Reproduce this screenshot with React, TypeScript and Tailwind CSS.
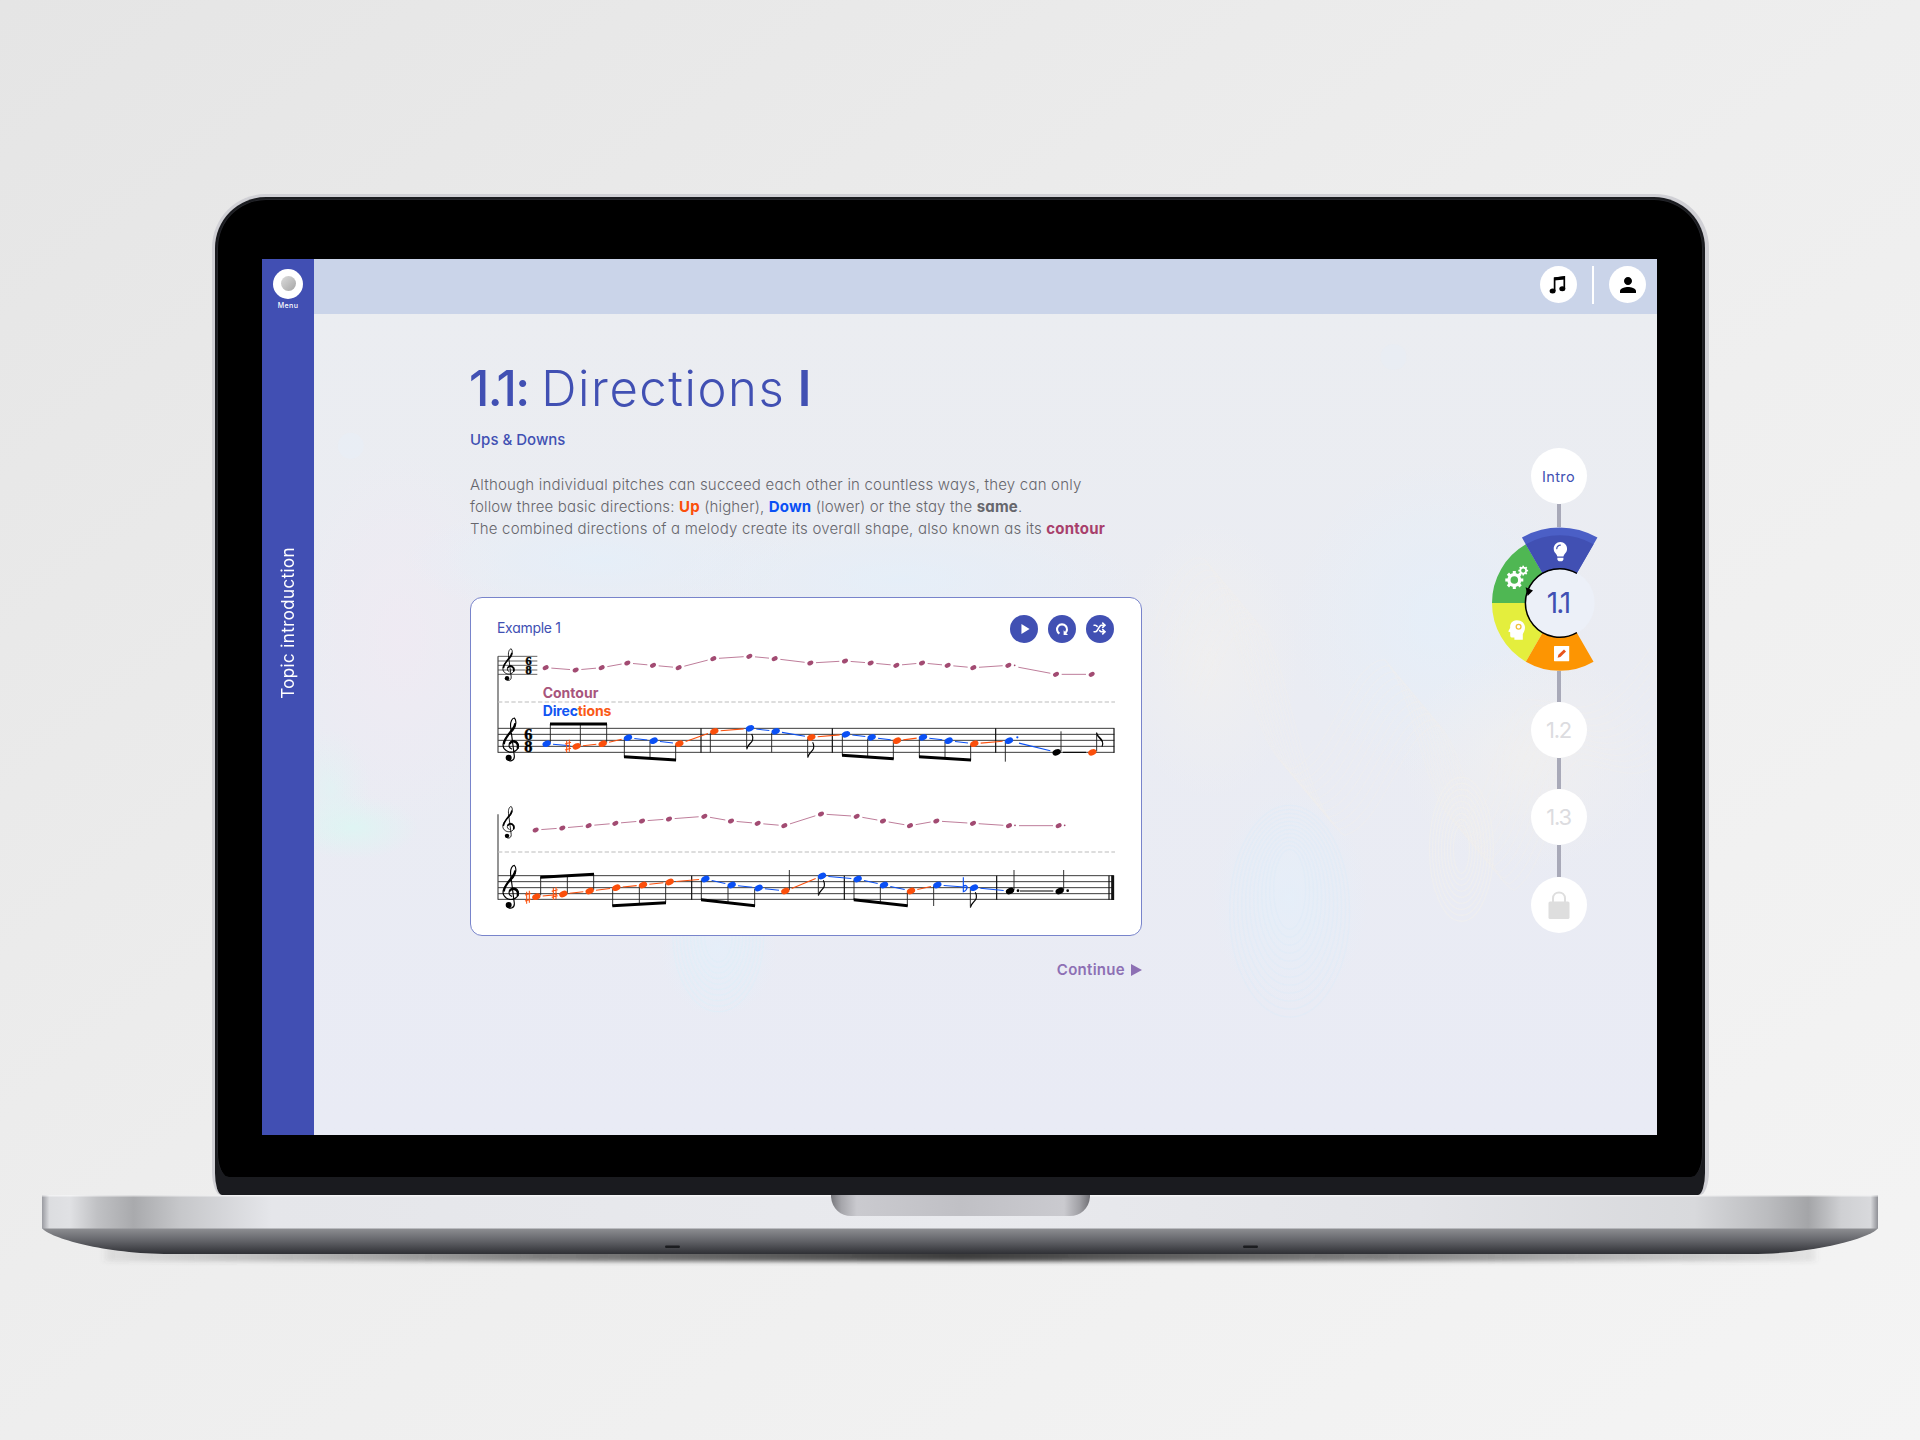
import { FaLightbulb } from "react-icons/fa";
import { MdPerson } from "react-icons/md";
import { Shuffle } from "lucide-react";

const UP = "#fb4f0b";
const DOWN = "#0a50f5";
const SAME = "#000000";
const PLUM = "#a24b72";

type Point = [number, number];

const contour1: Point[] = [
  [257, 233], [347, 240], [425, 233], [502, 219], [579, 226], [656, 233], [760, 206], [868, 199], [944, 206], [1051, 219],
  [1155, 213], [1232, 219], [1309, 226], [1386, 219], [1463, 226], [1540, 233], [1645, 226], [1788, 253], [1895, 253],
];
const contour2: Point[] = [
  [227, 720], [307, 714], [386, 707], [466, 700], [546, 693], [627, 687], [733, 679], [813, 693], [893, 700], [973, 707],
  [1083, 672], [1190, 679], [1269, 693], [1350, 707], [1429, 693], [1539, 700], [1647, 707], [1796, 707],
];
const melody1: [number, number, string][] = [
  [260, 461, DOWN], [350, 469, UP], [428, 461, UP], [504, 443, DOWN], [581, 452, DOWN], [658, 461, UP], [763, 424, UP],
  [870, 415, DOWN], [947, 424, DOWN], [1054, 442, UP], [1158, 433, DOWN], [1235, 442, DOWN], [1311, 452, UP],
  [1389, 442, DOWN], [1466, 452, DOWN], [1543, 461, UP], [1647, 452, DOWN], [1790, 487, SAME], [1897, 487, UP],
];
const melody2: [number, number, string][] = [
  [229, 920, UP], [310, 912, UP], [389, 903, UP], [469, 893, UP], [549, 885, UP], [629, 876, UP], [736, 867, DOWN],
  [815, 885, DOWN], [896, 894, DOWN], [976, 903, UP], [1086, 858, DOWN], [1193, 867, DOWN], [1272, 885, DOWN],
  [1353, 903, UP], [1432, 885, DOWN], [1542, 893, DOWN], [1650, 903, SAME], [1799, 903, SAME],
];
const stems: [number, number, number][] = [
  [271, 402, 458], [361, 402, 465], [440, 402, 458], [493, 446, 502], [570, 455, 506], [647, 464, 511], [751, 428, 487],
  [860, 418, 474], [935, 428, 487], [1043, 446, 500], [1147, 436, 496], [1223, 446, 502], [1300, 455, 507], [1378, 446, 502],
  [1455, 455, 506], [1532, 464, 511], [1636, 455, 515], [1803, 424, 484], [1910, 427, 484],
  [242, 860, 916], [322, 856, 909], [401, 852, 900], [458, 896, 948], [538, 888, 944], [617, 880, 938], [724, 870, 930],
  [804, 888, 938], [884, 897, 948], [988, 840, 900], [1075, 861, 914], [1182, 870, 930], [1261, 888, 938], [1342, 906, 948],
  [1421, 888, 948], [1531, 897, 950], [1662, 840, 900], [1811, 840, 900],
];
const beams: [number, number, number, number][] = [
  [271, 402, 440, 402], [493, 500, 647, 510], [1147, 496, 1300, 506], [1378, 500, 1532, 510],
  [242, 862, 401, 853], [458, 947, 617, 938], [724, 929, 884, 947], [1182, 929, 1342, 947],
];

function Clef({ x, y, scale }: { x: number; y: number; scale: number }) {
  return (
    <g transform={`translate(${x} ${y}) scale(${scale})`} fill="none" stroke="#000" strokeLinecap="round">
      <path strokeWidth="3.4" d="M14 125 C20 134 37 132 36 116 L25 30 C23 12 30 2 36 2 C43 8 42 26 33 38 C22 51 2 64 2 82 C2 98 18 106 30 104 C43 102 50 92 48 82 C45 69 28 66 22 77 C18 86 21 92 28 95" />
      <path strokeWidth="6.5" d="M38 20 C37 36 8 55 5 78" />
      <path strokeWidth="6.5" d="M46 92 C50 76 32 66 23 78" />
      <circle cx="19" cy="121" r="9" fill="#000" stroke="none" />
    </g>
  );
}

function Meter({ x, y1, y2, size }: { x: number; y1: number; y2: number; size: number }) {
  return (
    <g fontFamily="Liberation Serif, serif" fontWeight="700" fontSize={size} textAnchor="middle" stroke="#000" strokeWidth="1.2">
      <text x={x} y={y1}>6</text>
      <text x={x} y={y2}>8</text>
    </g>
  );
}

function Staff({ lines, x2, width }: { lines: number[]; x2: number; width: number }) {
  return (
    <g stroke="#2c2c2c" strokeWidth={width}>
      {lines.map((y) => (
        <line key={y} x1="114" x2={x2} y1={y} y2={y} />
      ))}
    </g>
  );
}

function Links({ notes, gap, colour }: { notes: Point[]; gap: number; colour?: string }) {
  return (
    <>
      {notes.slice(0, -1).map(([x, y], i) => {
        const [nx, ny] = notes[i + 1];
        const left = nx - x > 135 ? 30 : gap;
        const t = left / (nx - x);
        const u = gap / (nx - x);
        const stroke = colour ?? (ny < y ? UP : ny > y ? DOWN : SAME);
        return (
          <line
            key={x}
            x1={x + left}
            y1={y + (ny - y) * t}
            x2={nx - gap}
            y2={ny - (ny - y) * u}
            stroke={stroke}
            strokeWidth={colour ? 2.6 : 3.2}
          />
        );
      })}
    </>
  );
}

function Score() {
  return (
    <svg viewBox="90 165 1896 840" className="h-[280px] w-[632px]">
      <Staff lines={[199, 213, 226, 240, 253]} x2={232} width={2.2} />
      <Staff lines={[415, 433, 451, 469, 487]} x2={1963} width={2.8} />
      <Staff lines={[857, 875, 893, 911, 928]} x2={1961} width={2.8} />
      <g stroke="#444" strokeWidth="3.4">
        <line x1="114" x2="114" y1="199" y2="488" />
        <line x1="114" x2="114" y1="673" y2="929" />
      </g>
      <g stroke="#111" strokeWidth="3.6">
        {[723, 1117, 1607, 1962].map((x) => (
          <line key={x} x1={x} x2={x} y1="415" y2="488" />
        ))}
        {[695, 1153, 1610, 1947].map((x) => (
          <line key={x} x1={x} x2={x} y1="857" y2="929" />
        ))}
        <line x1="1958" x2="1958" y1="856" y2="930" strokeWidth="9" />
      </g>
      <g stroke="#bcbcbc" strokeWidth="3.6" strokeDasharray="13 7">
        <line x1="114" x2="1965" y1="336" y2="336" />
        <line x1="114" x2="1965" y1="786" y2="786" />
      </g>
      <Clef x={127} y={175} scale={0.74} />
      <Clef x={127} y={382} scale={1} />
      <Clef x={127} y={648} scale={0.74} />
      <Clef x={127} y={824} scale={1} />
      <Meter x={206} y1={224} y2={252} size={37} />
      <Meter x={205} y1={449} y2={486} size={49} />
      <g fontFamily="Inter, sans-serif" fontWeight="700" fontSize="42" className="[font-feature-settings:'cv11']">
        <text x="248" y="323" textLength="167" fill="#a8557c">Contour</text>
        <text x="248" y="379" textLength="206">
          <tspan fill="#1155f2">Direc</tspan>
          <tspan fill="#fa5a17">tions</tspan>
        </text>
      </g>
      <Links notes={contour1} gap={17} colour="#b4688a" />
      <Links notes={contour2} gap={17} colour="#b4688a" />
      <g fill={PLUM}>
        {[...contour1, ...contour2].map(([x, y]) => (
          <ellipse key={`${x}-${y}`} cx={x} cy={y} rx="9.5" ry="6.5" transform={`rotate(-28 ${x} ${y})`} />
        ))}
        <circle cx="1664" cy="226" r="2.6" />
        <circle cx="1665" cy="706" r="2.6" />
        <circle cx="1814" cy="706" r="2.6" />
      </g>
      <g stroke="#222" strokeWidth="2.8">
        {stems.map(([x, y1, y2]) => (
          <line key={`${x}-${y1}`} x1={x} x2={x} y1={y1} y2={y2} />
        ))}
      </g>
      <g fill="#000">
        {beams.map(([x1, y1, x2, y2]) => (
          <path key={`${x1}-${y1}`} d={`M${x1 - 1} ${y1 - 4.5}L${x2 + 1} ${y2 - 4.5}V${y2 + 4.5}L${x1 - 1} ${y1 + 4.5}Z`} />
        ))}
      </g>
      <g fill="none" stroke="#000" strokeWidth="3.4">
        {[[860, 478], [1043, 503], [1075, 917], [1531, 953]].map(([x, y]) => (
          <path key={x} d={`M${x} ${y}C${x + 3} ${y - 18} ${x + 28} ${y - 22} ${x + 15} ${y - 46}M${x + 1} ${y - 4}C${x + 5} ${y - 16} ${x + 12} ${y - 17} ${x + 17} ${y - 26}`} />
        ))}
        <path d="M1910 429C1913 444 1935 446 1926 470M1911 434C1916 445 1924 446 1928 458" />
      </g>
      <Links notes={melody1.map(([x, y]) => [x, y] as Point)} gap={19} />
      <Links notes={melody2.map(([x, y]) => [x, y] as Point)} gap={19} />
      {[...melody1, ...melody2].map(([x, y, colour]) => (
        <ellipse key={`${x}-${y}`} cx={x} cy={y} rx="13" ry="9" fill={colour} transform={`rotate(-24 ${x} ${y})`} />
      ))}
      <circle cx="1672" cy="442" r="3.4" fill={DOWN} />
      <circle cx="1674" cy="902" r="4" />
      <circle cx="1823" cy="902" r="4" />
      {[[324, 469], [204, 922], [284, 911]].map(([x, y]) => (
        <path
          key={x}
          d={`M${x - 4} ${y - 17}V${y + 19}M${x + 4} ${y - 20}V${y + 16}M${x - 9} ${y - 7}L${x + 9} ${y - 12}M${x - 9} ${y + 11}L${x + 9} ${y + 6}`}
          stroke={UP}
          strokeWidth="3.2"
        />
      ))}
      <path d="M1510 862V905C1524 900 1526 882 1511 887" stroke={DOWN} strokeWidth="3.4" fill="none" />
    </svg>
  );
}

const CX = 1559.7;
const CY = 603;

function polar(r: number, deg: number) {
  const a = (deg * Math.PI) / 180;
  return `${(CX + r * Math.cos(a)).toFixed(2)} ${(CY - r * Math.sin(a)).toFixed(2)}`;
}

function sector(inner: number, outer: number, from: number, to: number) {
  return `M${polar(outer, from)}A${outer} ${outer} 0 0 0 ${polar(outer, to)}L${polar(inner, to)}A${inner} ${inner} 0 0 1 ${polar(inner, from)}Z`;
}

function Gear({ x, y, r, teeth }: { x: number; y: number; r: number; teeth: number }) {
  return (
    <g transform={`translate(${x} ${y})`}>
      <circle r={r * 0.6} fill="none" stroke="#fff" strokeWidth={r * 0.36} />
      {Array.from({ length: teeth }, (_, i) => (
        <rect key={i} x={-r * 0.17} y={-r} width={r * 0.34} height={r * 0.34} fill="#fff" transform={`rotate(${(i * 360) / teeth})`} />
      ))}
    </g>
  );
}

function Wheel() {
  return (
    <svg viewBox="1479 527 160 144" className="h-[144px] w-[160px] shrink-0">
      <circle cx={CX} cy={CY} r="35" fill="#ecf0f8" />
      <path d={sector(34, 67.7, 120, 180)} fill="#4fb753" />
      <path d={sector(34, 67.7, 180, 240)} fill="#e4ee3d" />
      <path d={sector(34, 67.7, 240, 300)} fill="#fd9502" />
      <path d={sector(34, 75.5, 60, 120)} fill="#4b5fc6" />
      <path d={sector(34, 67.7, 60, 120)} fill="#4150b3" />
      <path d={`M${polar(34.3, 60)}A34.3 34.3 0 1 0 ${polar(34.3, 300)}`} fill="none" stroke="#000" strokeWidth="1.5" />
      <path d="M1525.6 587.2L1533 590.6L1527.6 596Z" />
      <Gear x={1514.3} y={580} r={9} teeth={8} />
      <Gear x={1523.2} y={570.6} r={4.9} teeth={8} />
      <path
        d="M1516.5 620.2C1521.5 620 1525 623.2 1525 627.6C1525 630.6 1523.6 632.4 1522.8 634.2V639.8H1514.4V637.4C1511.8 637.8 1510.2 637.4 1510.2 635.4V632.2L1508.2 631.4L1510.2 627.8C1509.8 623.6 1512 620.4 1516.5 620.2Z"
        fill="#fff"
      />
      <circle cx="1518.6" cy="626.8" r="2.4" fill="none" stroke="#f0c23c" strokeWidth="1.3" />
      <rect x="1554" y="646" width="15.2" height="15.2" rx="0.6" fill="#fff" />
      <path d="M1557.6 657.8L1558.4 654.8L1564 649.6L1566 651.6L1560.4 657Z" fill="#e8541c" />
      <g transform="translate(1550.7 542)">
        <FaLightbulb size={19.4} color="#fff" />
      </g>
      <text x="1559" y="613" textAnchor="middle" textLength="24.5" fontFamily="Inter, sans-serif" fontSize="28" fontWeight="400" fill="#4150b3">1.1</text>
    </svg>
  );
}

function Link({ h }: { h: string }) {
  return <div className={`w-1 shrink-0 bg-[#a8a9b8] ${h}`} />;
}

const disc = "flex size-14 shrink-0 items-center justify-center rounded-full bg-white";

function Progress() {
  return (
    <nav className="flex w-[196px] shrink-0 flex-col items-center pt-[134px] pr-px">
      <div className={disc}>
        <span className="pt-px text-[14.5px] tracking-[0.4px] text-[#4150b3]">Intro</span>
      </div>
      <Link h="h-[23px]" />
      <div className="flex pl-px"><Wheel /></div>
      <Link h="h-[31px]" />
      <div className={disc}>
        <span className="text-[22px] tracking-[-1.2px] text-[#dcdce0]">1.2</span>
      </div>
      <Link h="h-[31px]" />
      <div className={disc}>
        <span className="text-[22px] tracking-[-1.2px] text-[#dcdce0]">1.3</span>
      </div>
      <Link h="h-[32px]" />
      <div className={disc}>
        <svg viewBox="0 0 22 28" className="h-7 w-[22px]">
          <path d="M5 12V7.5C5 -0.6 17 -0.6 17 7.5V12" fill="none" stroke="#dedede" strokeWidth="2" />
          <rect x="0.5" y="10.5" width="21" height="17.5" rx="1.6" fill="#dedede" />
        </svg>
      </div>
    </nav>
  );
}

function Backdrop() {
  return (
    <svg viewBox="314 314 1343 822" className="absolute inset-0 size-full">
      <defs>
        <radialGradient id="mint">
          <stop offset="0" stopColor="#def5f3" stopOpacity="0.95" />
          <stop offset="1" stopColor="#dff4f2" stopOpacity="0" />
        </radialGradient>
        <radialGradient id="sky">
          <stop offset="0" stopColor="#e4effa" stopOpacity="0.75" />
          <stop offset="1" stopColor="#e4effa" stopOpacity="0" />
        </radialGradient>
        <radialGradient id="rose">
          <stop offset="0" stopColor="#f0eaf3" stopOpacity="0.8" />
          <stop offset="1" stopColor="#f0eaf3" stopOpacity="0" />
        </radialGradient>
        <radialGradient id="cream">
          <stop offset="0" stopColor="#f1f0ef" stopOpacity="0.75" />
          <stop offset="1" stopColor="#f1f0ef" stopOpacity="0" />
        </radialGradient>
      </defs>
      <ellipse cx="352" cy="828" rx="66" ry="32" fill="url(#mint)" />
      <ellipse cx="330" cy="790" rx="40" ry="60" fill="url(#mint)" opacity="0.6" />
      <ellipse cx="400" cy="640" rx="110" ry="190" fill="url(#rose)" />
      <ellipse cx="600" cy="560" rx="200" ry="60" fill="url(#sky)" />
      <ellipse cx="900" cy="580" rx="240" ry="70" fill="url(#sky)" />
      <ellipse cx="1210" cy="660" rx="90" ry="140" fill="url(#cream)" />
      <ellipse cx="1440" cy="620" rx="150" ry="160" fill="url(#sky)" />
      <ellipse cx="1530" cy="760" rx="130" ry="110" fill="url(#cream)" />
      <ellipse cx="718" cy="950" rx="60" ry="70" fill="url(#sky)" />
      <ellipse cx="1290" cy="900" rx="80" ry="110" fill="url(#sky)" />
      <circle cx="1394" cy="357" r="13" fill="#e8eef6" opacity="0.5" />
      <circle cx="350" cy="446" r="13" fill="#e8eef6" opacity="0.6" />
      <g fill="none" strokeWidth="1.3">
        {Array.from({ length: 12 }, (_, i) => (
          <path
            key={i}
            transform={`translate(${i * 5} ${i * 6})`}
            d="M1150 640C1165 590 1185 550 1205 560C1235 590 1245 740 1290 770C1330 760 1350 660 1385 660C1415 690 1425 810 1460 825C1495 800 1495 720 1530 700C1570 700 1590 740 1657 640"
            stroke="#f3f1ec"
            strokeOpacity="0.32"
          />
        ))}
        {Array.from({ length: 10 }, (_, i) => (
          <ellipse key={i} cx="718" cy="935" rx={14 + i * 3.5} ry={28 + i * 5.5} stroke="#e0eef8" strokeOpacity="0.7" />
        ))}
        {Array.from({ length: 12 }, (_, i) => (
          <ellipse key={i} cx="1290" cy={890 + i * 2} rx={16 + i * 4} ry={40 + i * 6} stroke="#dfebf7" strokeOpacity="0.55" />
        ))}
        {Array.from({ length: 9 }, (_, i) => (
          <ellipse key={i} cx="1462" cy="850" rx={8 + i * 3} ry={24 + i * 6} stroke="#f3f0ec" strokeOpacity="0.55" />
        ))}
      </g>
    </svg>
  );
}

const roundButton = "flex size-[28.5px] items-center justify-center rounded-full bg-[#4150b3]";

function Lesson() {
  return (
    <section className="flex w-[672px] shrink-0 flex-col pt-[50px]">
      <h1 className="flex h-[49px] items-baseline whitespace-pre text-[49px] leading-[49px] text-[#4150b3]">
        <span className="-ml-px font-medium tracking-[-1.7px]">1.1:</span>
        <span className="ml-[13px] font-light tracking-[1.55px]">Directions</span>
        <span className="ml-[12.5px] font-semibold">I</span>
      </h1>
      <h2 className="mt-[17px] text-[15px] leading-5 font-medium text-[#4150b3]">Ups &amp; Downs</h2>
      <div className="mt-6 h-[66px] whitespace-nowrap text-[15px] leading-[21.75px] font-light tracking-[0.2px] text-[#66666c]">
        <p>Although individual pitches can succeed each other in countless ways, they can only</p>
        <p className="tracking-[0.15px]">
          follow three basic directions: <b className="font-bold text-[#fb4f0b]">Up</b> (higher), <b className="font-bold text-[#0a50f5]">Down</b> (lower) or the stay the <b className="font-bold">same</b>.
        </p>
        <p>
          The combined directions of a melody create its overall shape, also known as its <b className="font-bold text-[#a83f6b]">contour</b>
        </p>
      </div>
      <article className="mt-[57px] flex h-[339px] flex-col rounded-xl border border-[#7884cb] bg-white">
        <header className="flex h-[47px] items-end justify-between pr-[27px] pb-[2px] pl-[26px]">
          <h3 className="pb-[5px] text-[14px] leading-5 tracking-[-0.3px] text-[#4150b3]">Example 1</h3>
          <div className="flex gap-[9.3px]">
            <button className={roundButton}>
              <svg viewBox="0 0 10 12" className="ml-0.5 h-3 w-[9px]"><path d="M0.5 0.5L9.5 6L0.5 11.5Z" fill="#fff" /></svg>
            </button>
            <button className={roundButton}>
              <svg viewBox="0 0 14 14" className="size-[14px]">
                <path d="M4.4 11.6A5 5 0 1 1 9.8 11.5" fill="none" stroke="#fff" strokeWidth="2.1" />
                <path d="M8.6 8.2V13H13Z" fill="#fff" />
              </svg>
            </button>
            <button className={roundButton}>
              <Shuffle className="size-[13px] text-white" strokeWidth={3} />
            </button>
          </div>
        </header>
        <div className="pl-[19px]"><Score /></div>
      </article>
      <div className="mt-6 flex items-center justify-end gap-[6px] text-[15px] leading-5 font-semibold tracking-[0.3px] text-[#8d70b4]">
        <span>Continue</span>
        <svg viewBox="0 0 11 12" className="h-3 w-[11px]"><path d="M0 0L11 6L0 12Z" fill="#8d70b4" /></svg>
      </div>
    </section>
  );
}

function Screen() {
  return (
    <div className="flex h-[876px] w-[1395px] overflow-hidden bg-[#eaebf4]">
      <aside className="flex w-[52px] shrink-0 flex-col items-center bg-[#414fb3] pt-[9.5px] text-white">
        <div className="flex size-[30px] items-center justify-center rounded-full bg-white">
          <div className="size-[15px] rounded-full bg-linear-to-br from-[#dcdcdc] to-[#a5a5a5]" />
        </div>
        <span className="mt-[2px] text-[7px] leading-[10px] font-medium tracking-[0.4px]">Menu</span>
        <span className="mt-[236px] rotate-180 text-[17px] leading-[22px] tracking-[0.38px] whitespace-nowrap [writing-mode:vertical-rl]">Topic introduction</span>
      </aside>
      <div className="flex flex-1 flex-col">
        <header className="flex h-[55px] shrink-0 items-start justify-end bg-[#cad4e9] pt-[7px] pr-[11px]">
          <div className="flex size-[37px] items-center justify-center rounded-full bg-white">
            <svg viewBox="0 0 17 18" className="mr-0.5 h-[18px] w-[17px]">
              <path d="M5.6 15V2.2L15.3 1V12.8" fill="none" stroke="#000" strokeWidth="1.7" />
              <path d="M5 1.6L16 0.2V3.4L5 4.6Z" />
              <ellipse cx="3.6" cy="15" rx="3" ry="2.5" />
              <ellipse cx="13.3" cy="12.8" rx="3" ry="2.5" />
            </svg>
          </div>
          <div className="mr-[15px] ml-[15px] h-[38px] w-[2px] bg-white" />
          <div className="flex size-[37px] items-center justify-center rounded-full bg-white">
            <MdPerson className="size-6" />
          </div>
        </header>
        <main className="relative flex-1 bg-linear-to-b from-[#ebedf1] to-[#e9ebf5]">
          <Backdrop />
          <div className="relative flex h-full justify-between pl-[156px]">
            <Lesson />
            <Progress />
          </div>
        </main>
      </div>
    </div>
  );
}

function Base() {
  return (
    <svg viewBox="0 1195 1920 75" className="h-[75px] w-[1920px] shrink-0">
      <defs>
        <linearGradient id="deck">
          <stop offset="0" stopColor="#9a9ba1" />
          <stop offset="0.004" stopColor="#dcdde0" />
          <stop offset="0.015" stopColor="#e0e1e4" />
          <stop offset="0.03" stopColor="#c0c1c4" />
          <stop offset="0.05" stopColor="#a9aaad" />
          <stop offset="0.075" stopColor="#c6c7ca" />
          <stop offset="0.125" stopColor="#e5e6ea" />
          <stop offset="0.5" stopColor="#e9eaee" />
          <stop offset="0.75" stopColor="#e3e4e8" />
          <stop offset="0.9" stopColor="#d8d9dc" />
          <stop offset="0.94" stopColor="#bbbcbf" />
          <stop offset="0.962" stopColor="#a4a5a8" />
          <stop offset="0.98" stopColor="#cfd0d3" />
          <stop offset="0.996" stopColor="#d8d9dc" />
          <stop offset="1" stopColor="#8f9096" />
        </linearGradient>
        <linearGradient id="belly" x1="0" y1="0" x2="0" y2="1">
          <stop offset="0" stopColor="#8f9094" />
          <stop offset="0.5" stopColor="#626368" />
          <stop offset="1" stopColor="#2f3035" />
        </linearGradient>
        <linearGradient id="notch">
          <stop offset="0" stopColor="#77777c" />
          <stop offset="0.04" stopColor="#a6a6ab" />
          <stop offset="0.1" stopColor="#cacacf" />
          <stop offset="0.5" stopColor="#c0c0c5" />
          <stop offset="0.9" stopColor="#cacacf" />
          <stop offset="0.96" stopColor="#a0a0a5" />
          <stop offset="1" stopColor="#707075" />
        </linearGradient>
        <linearGradient id="shade">
          <stop offset="0" stopColor="#555" stopOpacity="0.1" />
          <stop offset="0.25" stopColor="#444" stopOpacity="0.65" />
          <stop offset="0.5" stopColor="#333" stopOpacity="0.95" />
          <stop offset="0.75" stopColor="#444" stopOpacity="0.65" />
          <stop offset="1" stopColor="#555" stopOpacity="0.1" />
        </linearGradient>
        <filter id="soft" x="-5%" y="-100%" width="110%" height="300%">
          <feGaussianBlur stdDeviation="3 2" />
        </filter>
      </defs>
      <rect x="105" y="1247" width="1710" height="14.5" fill="url(#shade)" filter="url(#soft)" />
      <path d="M42 1228H1878C1871 1238 1815 1254 1750 1254H170C105 1254 49 1238 42 1228Z" fill="url(#belly)" />
      <rect x="42" y="1195" width="1836" height="33.5" fill="url(#deck)" />
      <rect x="42" y="1195" width="1836" height="1.5" fill="#fff" opacity="0.6" />
      <path d="M831 1195H1090V1197C1089 1209 1080 1216 1070 1216H851C841 1216 832 1209 831 1197Z" fill="url(#notch)" />
      <rect x="665" y="1245.5" width="15" height="2.5" rx="1.2" fill="#1c1d20" />
      <rect x="1243" y="1245.5" width="15" height="2.5" rx="1.2" fill="#1c1d20" />
    </svg>
  );
}

export default function App() {
  return (
    <div className="flex h-[1440px] w-[1920px] flex-col items-center overflow-hidden bg-linear-to-br from-[#e5e5e5] via-[#eeeeee] to-[#f4f4f4] pt-[194px] font-['Inter',sans-serif] [font-feature-settings:'cv11']">
      <div className="h-[1001px] w-[1497px] shrink-0 rounded-t-[54px] bg-[#d0d0d5] px-[3.5px] pt-[3px] [border-bottom-left-radius:9px_24px] [border-bottom-right-radius:9px_24px]">
        <div className="h-[998px] rounded-t-[51px] bg-[#1a1b1f] px-[2px] pt-[2px] [border-bottom-left-radius:7px_22px] [border-bottom-right-radius:7px_22px]">
          <div className="flex h-[978px] flex-col items-center rounded-t-[49px] border-x border-t border-[#25262b] bg-black pt-[59px] pr-px [border-bottom-left-radius:12px_24px] [border-bottom-right-radius:12px_24px]">
            <Screen />
          </div>
        </div>
      </div>
      <Base />
    </div>
  );
}
